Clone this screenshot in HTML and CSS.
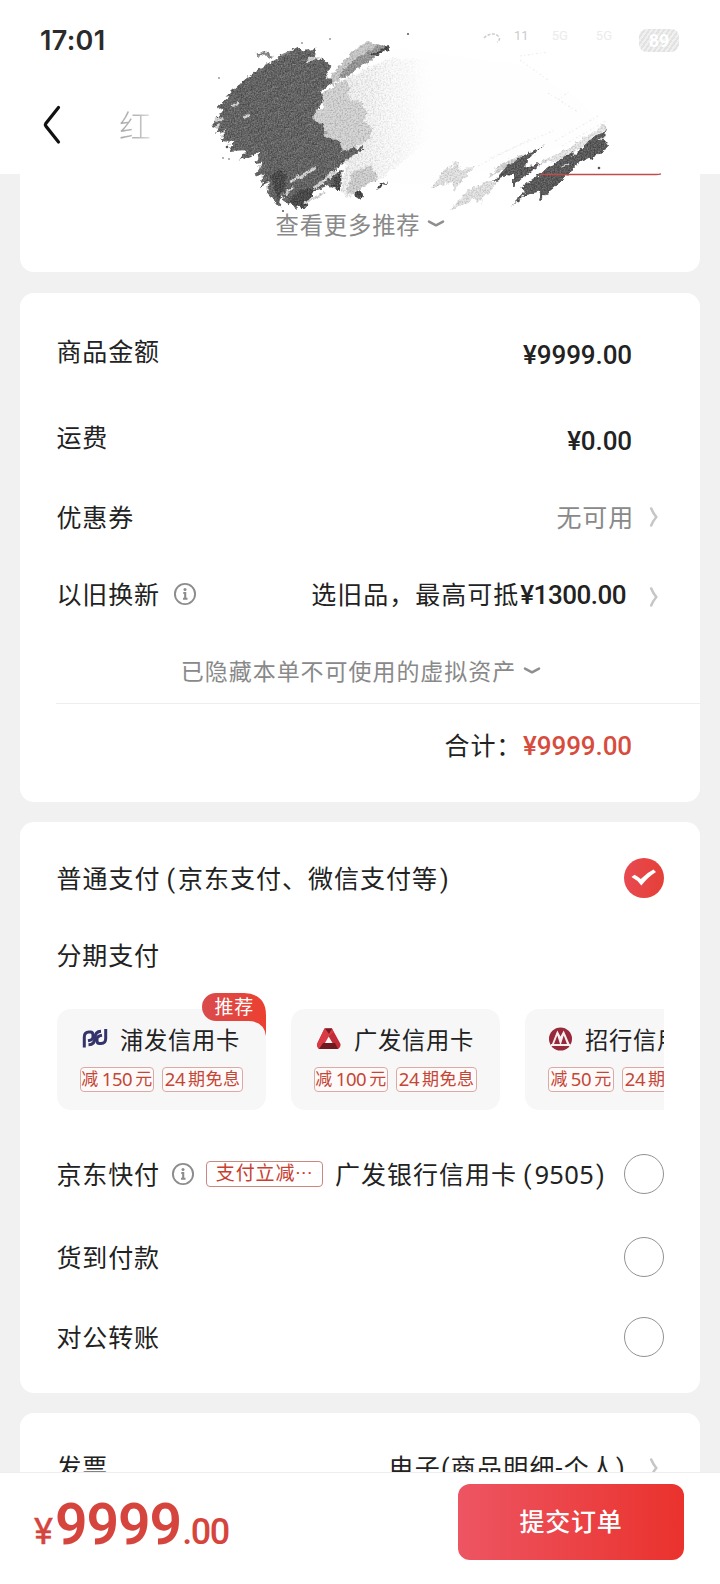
FILE: index.html
```html
<!DOCTYPE html>
<html lang="zh-CN">
<head>
<meta charset="utf-8">
<title>红</title>
<link rel="stylesheet" href="styles.css">
</head>
<body>
<svg class="defs" width="0" height="0">
  <symbol id="info" viewBox="0 0 24 24"><circle cx="12" cy="12" r="10.1" fill="none" stroke="#8c8c8c" stroke-width="1.9"/><circle cx="12" cy="7.6" r="1.5" fill="#8c8c8c"/><path d="M10.300 11h1.900v5.600M10 16.800h4.500" fill="none" stroke="#8c8c8c" stroke-width="2.100"/></symbol>
  <symbol id="next" viewBox="0 0 10 22"><path d="M2.200 2.500Q4 7 7.300 11Q4 15 2.200 19.500" fill="none" stroke="#c6c6c6" stroke-width="2.500" stroke-linecap="round"/></symbol>
  <symbol id="down" viewBox="0 0 18 10"><path d="M2 2.600L9 6.300L16 2.600" fill="none" stroke="#8f8f8f" stroke-width="2.500" stroke-linecap="round" stroke-linejoin="round"/></symbol>
</svg>
<div class="screen">
  <header class="header">
    <div class="status">
      <span class="clock">17:01</span>
      <div class="signals">
        <svg width="20" height="18" viewBox="0 0 20 18"><path d="M2 7Q8 1 15 4Q20 8 15 11" fill="none" stroke="#ccc" stroke-width="1.6" stroke-dasharray="3 1.5"/></svg>
        <span class="sig rate">11</span><span class="sig faint">5G</span><span class="sig faint second">5G</span>
        <span class="battery">89</span>
      </div>
    </div>
    <div class="nav">
      <svg width="20" height="40" viewBox="0 0 20 40"><path d="M15.500 2.500L2.800 18.500Q2 19.700 2.800 21L15.500 37" fill="none" stroke="#111" stroke-width="3.200" stroke-linecap="round"/></svg>
      <span class="title">红</span>
    </div>
  </header>

  <main class="content">
    <section class="card more-card">
      <div class="more">查看更多推荐<svg width="18" height="10"><use href="#down"/></svg></div>
    </section>

    <section class="card amounts">
      <div class="row r1"><span class="label">商品金额</span><span class="money">¥9999.00</span></div>
      <div class="row r2"><span class="label">运费</span><span class="money">¥0.00</span></div>
      <div class="row r3"><span class="label">优惠券</span><span class="muted">无可用</span><svg class="next" width="10" height="22"><use href="#next"/></svg></div>
      <div class="row r4"><span class="label">以旧换新</span><svg class="info" width="24" height="24"><use href="#info"/></svg><span class="trade">选旧品，最高可抵<b>¥1300.00</b></span><svg class="next low" width="10" height="22"><use href="#next"/></svg></div>
      <div class="hidden-assets">已隐藏本单不可使用的虚拟资产<svg width="18" height="10"><use href="#down"/></svg></div>
      <div class="total"><span>合计：</span><span class="money red">¥9999.00</span></div>
    </section>

    <section class="card payment">
      <div class="row p1"><span class="label">普通支付<i class="paren">(</i>京东支付、微信支付等<i class="paren">)</i></span>
        <svg class="radio" width="42" height="42" viewBox="0 0 42 42"><defs><linearGradient id="ck"><stop stop-color="#e84a52"/><stop offset="1" stop-color="#e53f37"/></linearGradient></defs><circle cx="21" cy="21" r="20" fill="url(#ck)"/><path d="M8.500 20L11.500 17.800Q15 19.500 17.800 22Q24 15.500 30.500 12.500L33 15Q25 20 18.300 28.500Q14.500 23 8.500 20Z" fill="#fff"/></svg>
      </div>
      <div class="row p2"><span class="label">分期支付</span></div>
      <div class="banks">
        <article class="bank">
          <svg class="badge" width="64" height="43" viewBox="0 0 64 43"><defs><linearGradient id="bd"><stop stop-color="#d94b4d"/><stop offset="1" stop-color="#ec4030"/></linearGradient></defs><path d="M14 0H42Q64 1 64 22V43Q62 28 46 28H14A14 14 0 0 1 14 0Z" fill="url(#bd)"/></svg>
          <span class="badge-text">推荐</span>
          <div class="bank-name"><svg width="26" height="24" viewBox="0 0 26 24"><g fill="none" stroke="#34336b" stroke-width="3"><path d="M2.300 20.500V10Q2.300 5 7 5H8.500Q11 5 11 8V10Q11 13 6 13.800"/><path d="M23.700 2V11.500Q23.700 16.500 19 16.500H17.500Q15 16.500 15 13.500V12Q15 9 20 8.200"/><path d="M6.500 17.800Q13 17.500 13 11Q13 4.500 19 4.300"/></g></svg><span>浦发信用卡</span></div>
          <div class="tags"><span class="tag w73">减<em>150</em>元</span><span class="tag w81"><em>24</em>期免息</span></div>
        </article>
        <article class="bank">
          <div class="bank-name"><svg width="26" height="24" viewBox="0 0 26 24"><path d="M8.500 1.500H16L24.500 17Q25 20 22 22H3Q0 19 1.500 16Z" fill="#c12c37"/><path d="M8.500 1.500H16L17.500 5 13 9 8 18.500 5.500 22H3Q0 19 1.500 16Z" fill="#d93a43"/><path d="M9 1.500H16L13 7Z" fill="#741c24"/><path d="M7 16H19L22 22H3Z" fill="#701a20"/><path d="M12.700 9.500L16.500 16H9Z" fill="#f7f7f7"/></svg><span>广发信用卡</span></div>
          <div class="tags"><span class="tag w73">减<em>100</em>元</span><span class="tag w81"><em>24</em>期免息</span></div>
        </article>
        <article class="bank">
          <div class="bank-name"><svg width="26" height="24" viewBox="0 0 26 24"><circle cx="12.500" cy="12" r="11.500" fill="#98293a"/><path d="M4 17L9.300 3.500L12.500 9.500L15.700 3.500L21.500 17H22.500V19H3V17Z" fill="#f7eff0"/><path d="M9.300 8.500L12 17H6Z M15.700 8.500L19 17H13Z" fill="#98293a"/></svg><span>招行信用卡</span></div>
          <div class="tags"><span class="tag w65">减<em>50</em>元</span><span class="tag w81"><em>24</em>期免息</span></div>
        </article>
      </div>
      <div class="row p3"><span class="label">京东快付</span><svg class="info" width="24" height="24"><use href="#info"/></svg><span class="promo">支付立减<i>···</i></span><span class="account">广发银行信用卡<i class="paren">(</i><em>9505</em><i class="paren">)</i></span><i class="radio empty"></i></div>
      <div class="row p4"><span class="label">货到付款</span><i class="radio empty"></i></div>
      <div class="row p5"><span class="label">对公转账</span><i class="radio empty"></i></div>
    </section>

    <section class="card invoice">
      <div class="row"><span class="label">发票</span><span class="kind">电子(商品明细-个人)</span><svg class="next" width="10" height="22"><use href="#next"/></svg></div>
    </section>
  </main>

  <footer class="footer">
    <div class="price"><span class="yen">¥</span><strong>9999</strong><span class="cents">.00</span></div>
    <button class="submit">提交订单</button>
  </footer>

  <svg class="scribble" width="720" height="230" viewBox="0 0 720 230">
    <defs>
      <filter id="rough" x="-5%" y="-5%" width="110%" height="110%" color-interpolation-filters="sRGB">
        <feTurbulence type="fractalNoise" baseFrequency=".2" numOctaves="3" seed="8" result="n"/>
        <feDisplacementMap in="SourceGraphic" in2="n" scale="6" xChannelSelector="R" yChannelSelector="G" result="d"/>
        <feTurbulence type="fractalNoise" baseFrequency=".7" numOctaves="2" seed="3"/>
        <feColorMatrix values="1.300 0 0 0 -.15  1.300 0 0 0 -.15  1.300 0 0 0 -.15  0 0 0 0 .28" result="g"/>
        <feComposite in="g" in2="d" operator="in" result="gi"/>
        <feMerge><feMergeNode in="d"/><feMergeNode in="gi"/></feMerge>
      </filter>
      <filter id="soft" x="-5%" y="-5%" width="110%" height="110%" color-interpolation-filters="sRGB">
        <feTurbulence type="fractalNoise" baseFrequency=".2" numOctaves="3" seed="5" result="n"/>
        <feDisplacementMap in="SourceGraphic" in2="n" scale="7" xChannelSelector="R" yChannelSelector="G" result="d"/>
        <feTurbulence type="fractalNoise" baseFrequency=".6" numOctaves="2" seed="4"/>
        <feColorMatrix values="2 0 0 0 -.2  2 0 0 0 -.2  2 0 0 0 -.2  0 0 0 0 .2" result="g"/>
        <feComposite in="g" in2="d" operator="in" result="gi"/>
        <feMerge><feMergeNode in="d"/><feMergeNode in="gi"/></feMerge>
      </filter>
      <linearGradient id="fade" gradientUnits="userSpaceOnUse" x1="330" y1="0" x2="430" y2="0"><stop stop-color="#ececec"/><stop offset=".4" stop-color="#f2f2f2" stop-opacity=".8"/><stop offset="1" stop-color="#fbfbfb" stop-opacity="0"/></linearGradient>
      <pattern id="grain" width="38" height="11" patternUnits="userSpaceOnUse" patternTransform="rotate(-27)"><path d="M0 2H25M12 7H38" stroke="#303030" stroke-width="1.200" opacity=".5"/><path d="M3 4.500H20M24 9.500H34" stroke="#808080" stroke-width="1" opacity=".4"/></pattern>
    </defs>
    <path d="M320 72L400 48L520 65L580 100L606 130L500 168L420 184L378 183L345 200L320 175Z" fill="#fefefe"/>
    <g filter="url(#soft)">
      <path d="M326 82L348 55L366 42L374 43L387 47L365 60L333 85Z" fill="#c2c2c2"/>
      <path d="M322 100L334 88L352 76L372 66L392 58L430 60V140L405 160L380 178L358 183L352 198L340 192L346 165L337 152L322 142L320 125L308 121L324 106L319 96Z" fill="url(#fade)"/>
      <path d="M325 91L344 79L350 88L347 98L362 104L368 114L364 120L373 128L369 139L357 147L346 153L337 152L322 142L320 125L308 121L324 106L319 97Z" fill="#cecece"/>
      <path d="M345 192L354 172L372 165L378 181L365 185L356 194Z" fill="#c8c8c8"/>
      <path d="M432 187L444 170L459 161L458 170L473 168L454 191L451 183ZM450 211L467 190L491 181L500 180L478 203L476 198Z" fill="#e0e0e0"/>
      <path d="M487 177L502 164L520 155L534 154L506 170Z" fill="#d0d0d0"/>
      <path d="M545 160L572 146L605 124L608 130L584 146L558 163Z" fill="#e6e6e6"/>
    </g>
    <g filter="url(#rough)">
      <path d="M338 77L348 64L380 45L391 47L368 61L346 78Z" fill="#9a9a9a"/>
      <path d="M371 55L389 45L391 48L378 55Z" fill="#333"/>
      <g stroke="#595959" stroke-width="2"><path d="M211 127L224 111L219 107L234 94L229 95L246 80L259 70L275 61L285 55L298 48L303 52L315 50L314 55L305 60L324 61L330 67L323 78L332 81L319 91L323 99L311 118L323 127L322 136L339 143L341 152L364 148L345 158L334 170L315 181L342 172L332 184L311 191L293 198L296 207L284 199L281 190L279 205L269 193L271 180L262 184L267 173L256 175L267 160L257 162L260 151L242 158L248 149L231 150L236 141L222 140L229 128L217 132L223 120Z" fill="#595959"/></g>
      <path d="M213 125L223 110L233 91L260 68L298 48L324 61L323 78L331 83L319 91L323 101L311 120L324 127L339 143L341 153L363 148L334 170L332 184L293 198L278 205L270 195L258 170L258 151L231 148L219 131Z" fill="url(#grain)"/>
      <path d="M270 176L282 169L287 180L278 201ZM288 201L300 190L316 188L310 200L304 209L296 206ZM330 186L340 171L341 191ZM354 195L359 190L363 194L360 199ZM377 190L388 182L380 185Z" fill="#343434"/>
      <path d="M257 56L265 53L272 57M280 56L290 52" stroke="#888" stroke-width="2.500" fill="none"/>
      <path d="M290 182L316 168M313 189L336 172M231 107L239 102M244 118L250 115M215 121L223 118M306 61L314 57M285 195L293 187M305 203L325 192" stroke="#eee" stroke-width="2.800" fill="none"/>
      <path d="M493 182L508 165L545 144L531 155L524 167L541 164L518 182L513 187L513 174Z" fill="#4c4c4c"/>
      <path d="M511 206L525 192L520 188L548 168L573 152L572 157L591 139L607 130L603 139L609 147L594 157L578 163L570 173L550 191L539 201L541 191L526 195Z" fill="#4c4c4c"/>
      <path d="M540 164L550 157M561 167L569 164M598 140L604 137" stroke="#eee" stroke-width="2"/>
    </g>
    <path d="M541 174.500H656Q659 174.500 661 173.800" fill="none" stroke="#bd4c4c" stroke-width="1.300"/>
    <g fill="#555"><circle cx="219" cy="78" r=".8"/><circle cx="302" cy="43" r=".8"/><circle cx="227" cy="147" r="1.300"/><circle cx="223" cy="158" r=".8"/><circle cx="229" cy="159" r=".8"/><circle cx="330" cy="39" r=".8"/><circle cx="408" cy="34" r="1"/><circle cx="599" cy="168" r="1.300"/><circle cx="283" cy="211" r="1"/></g>
    <g stroke="#dedede" stroke-width="1.200" stroke-dasharray="2 2 1 3" opacity=".5"><path d="M478 166L530 139M490 158L555 130M555 141L598 116M562 146L606 121M520 60L548 80M520 56L548 52M548 93L578 112M558 100L570 91M385 159L401 150M381 171L400 161"/></g>
  </svg>
</div>
</body>
</html>
```
FILE: styles.css
```css
* { box-sizing: border-box; }
body { margin: 0; background: #f1f1f1; font-family: Roboto, "Noto Sans CJK SC", sans-serif; font-size: 25px; letter-spacing: .85px; color: #222; }
i, em { font-style: normal; }
svg { flex: none; display: block; }
.defs { position: absolute; }
.screen { position: relative; width: 720px; height: 1584px; overflow: hidden; display: flex; flex-direction: column; }

.header { height: 174px; flex: none; background: #fff; }
.status { height: 80px; display: flex; align-items: center; justify-content: space-between; padding: 0 41px 0 40px; }
.clock { font: 600 27px/40px Inter, sans-serif; letter-spacing: .3px; color: #2b2b2b; padding-top: 2px; }
.signals { display: flex; align-items: center; height: 24px; }
.sig { font-size: 13px; letter-spacing: 0; color: #ccc; }
.rate { margin-left: 12px; margin-top: -10px; }
.faint { color: #ebebeb; margin-left: 23px; margin-top: -10px; }
.faint.second { margin-left: 28px; }
.battery { width: 40px; height: 23px; margin-left: 27px; border-radius: 8px; background: repeating-linear-gradient(125deg, #e2e2e2 0 2px, #f0f0f0 2px 4px); color: #fff; font-size: 18px; font-weight: 700; line-height: 23px; text-align: center; letter-spacing: 0; }
.nav { display: flex; align-items: center; height: 90px; padding-left: 43px; }
.title { margin-left: 56px; margin-top: -3px; font-size: 32px; font-weight: 300; color: transparent; background: linear-gradient(90deg, #aaa, #bbb 60%, #e5e5e5); background-clip: text; -webkit-background-clip: text; }

.content { flex: 1; min-height: 0; overflow: hidden; padding: 0 20px; display: flex; flex-direction: column; gap: 20px; }
.card { background: #fff; border-radius: 14px; flex: none; }
.more-card { height: 98px; border-radius: 0 0 14px 14px; margin-bottom: 1px; }
.more { display: flex; justify-content: center; align-items: center; gap: 7px; height: 100px; font-size: 23.300px; color: #898989; padding-left: 1px; }
.more svg { margin-top: -1px; }
.row { display: flex; align-items: center; padding: 0 36px; height: 80px; white-space: nowrap; line-height: 36px; }
.label { padding: 3px 0 0 .5px; }
.next { margin-left: 16px; margin-right: 5px; }
.money { font-weight: 500; font-size: 26px; letter-spacing: -.1px; margin-left: auto; }

.amounts { height: 509px; }
.r1 { height: 84px; margin-top: 16px; }
.r2 { height: 86px; }
.r2 .label { padding-top: 5px; }
.r1 .money, .r2 .money { margin-right: 32px; padding-top: 8px; }
.r2 .money { padding-top: 10px; }
.r3 { height: 76px; }
.muted { margin-left: auto; margin-right: -1px; color: #898989; padding-top: 3px; }
.r4 { height: 78px; }
.info { margin-left: 13px; }
.trade { margin-left: auto; padding-top: 2px; letter-spacing: 1px; }
.trade b { font-weight: 500; font-size: 26px; letter-spacing: -.5px; margin-left: 1px; }
.low { margin-left: 23px; margin-top: 5px; }
.hidden-assets { display: flex; align-items: center; justify-content: center; height: 69px; gap: 7px; font-size: 23px; letter-spacing: .95px; color: #898989; margin-top: 1px; padding: 9px 0 0 2px; line-height: 30px; }
.hidden-assets svg { margin-top: -4px; }
.total { margin-left: 36px; border-top: 1px solid #eee; height: 83px; display: flex; justify-content: flex-end; align-items: center; padding-right: 68px; }
.total > span { margin-top: 2px; }
.total .money { margin-left: 1px; }
.total span:first-child { margin-top: -2px; }
.red { color: #d84c3d; }

.payment { height: 571px; }
.p1 { height: 111px; }
.p1 .label { letter-spacing: 1px; padding-top: 4px; }
.paren { padding: 0 2px 0 6px; }
.paren:last-child { padding: 0 0 0 2px; }
.radio { margin-left: auto; margin-right: -1px; flex: none; }
.empty { width: 40px; height: 40px; margin-right: 0; border: 1.500px solid #929292; border-radius: 50%; }
.p2 { height: 45px; }
.p2 .label { padding-top: 3px; }
.banks { display: flex; gap: 25px; margin: 0 36px 0 37px; width: 607px; overflow: hidden; padding-top: 31px; height: 132px; }
.bank { position: relative; flex: none; width: 209px; height: 101px; background: #f7f7f7; border-radius: 14px; padding: 12px 0 0 23px; }
.badge { position: absolute; right: 0; top: -16px; }
.badge-text { position: absolute; right: 12px; top: -15px; color: #fff; font-size: 19px; line-height: 28px; letter-spacing: .7px; }
.bank-name { display: flex; align-items: center; gap: 12px; height: 36px; font-size: 23.300px; letter-spacing: .7px; white-space: nowrap; }
.bank-name svg { margin: -1px 0 0 2px; }
.bank:last-child .bank-name { gap: 11px; }
.bank:last-child .bank-name svg { margin-left: 0; }
.tags { display: flex; gap: 8px; margin-top: 10px; }
.tag { height: 25px; border: 1px solid #dcaaa5; border-radius: 4px; background: #fffafa; color: #c34736; font-size: 17px; line-height: 23px; letter-spacing: .4px; white-space: nowrap; display: flex; justify-content: center; gap: 3px; flex: none; }
.tag em { font-family: "Noto Sans", sans-serif; font-size: 18.500px; letter-spacing: -.4px; line-height: 22px; }
.w73 { width: 74px; }
.w81 { width: 81px; }
.w65 { width: 66px; }
.p3 { height: 84px; margin-top: 22px; }
.p3 .info { margin-left: 11px; }
.promo { width: 117px; height: 26px; border: 1px solid #c98980; border-radius: 4px; color: #c83e2f; font-size: 19px; line-height: 24px; margin-left: 11px; text-align: center; letter-spacing: .9px; }
.account { margin-left: 12px; padding-top: 2px; letter-spacing: 1px; }
.account em { font-family: "Noto Sans", sans-serif; font-size: 25.500px; letter-spacing: .3px; }
.p4 { height: 82px; }
.p5 { height: 78px; }

.invoice { height: 140px; }
.invoice .row { height: 110px; }
.invoice .label { padding-top: 1px; }
.kind { margin-left: auto; padding-top: 1px; letter-spacing: 1.200px; }
.invoice .next { margin-left: 23px; }

.footer { flex: none; height: 112px; background: #fff; border-top: 1px solid #eee; display: flex; justify-content: space-between; align-items: flex-start; padding: 11px 36px 0 34px; }
.price { display: flex; align-items: baseline; color: #d6453d; font-size: 36px; font-weight: 500; letter-spacing: 0; line-height: 70px; padding-top: 6px; }
.yen { -webkit-text-stroke: .4px #d6453d; font-weight: 400; }
.price strong { font-size: 57px; font-weight: 600; letter-spacing: -1px; margin-left: 2px; }
.price .cents { margin-left: 1px; letter-spacing: -1.500px; }
.submit { width: 226px; height: 76px; border: 0; border-radius: 12px; background: linear-gradient(90deg, #ed5562, #ea322d); color: #fff; font: 500 25px "Noto Sans CJK SC", sans-serif; letter-spacing: .8px; padding: 0 0 4px; }

.scribble { position: absolute; left: 0; top: 0; pointer-events: none; }
```
